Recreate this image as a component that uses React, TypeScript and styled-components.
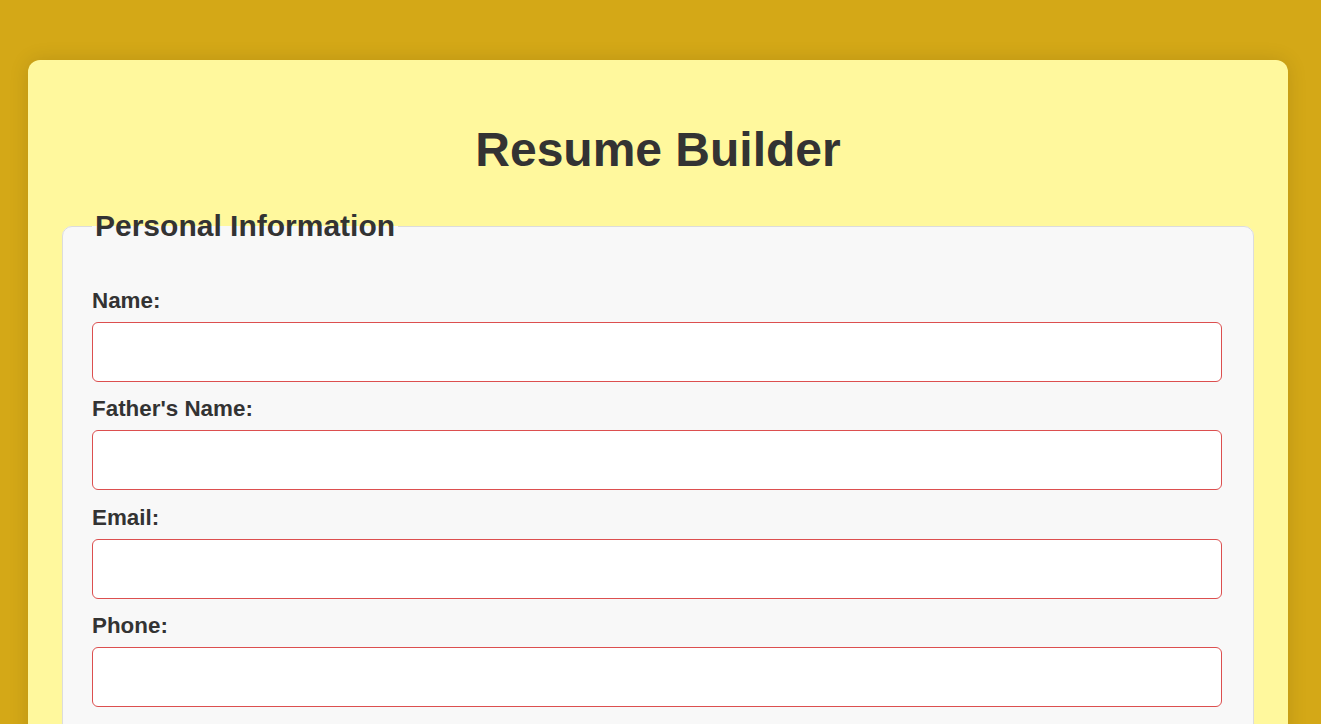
import React from "react";
import styled, { createGlobalStyle } from "styled-components";

const GlobalStyle = createGlobalStyle`
  html, body {
    margin: 0;
    padding: 0;
    background: #d4a817;
    font-family: "Liberation Sans", Arial, Helvetica, sans-serif;
    color: #333;
  }
  * { box-sizing: border-box; }
`;

const Page = styled.div`
  padding: 60px 33px 40px 28px;
  min-height: 100vh;
`;

const Card = styled.div`
  background: #fff89d;
  border-radius: 12px;
  box-shadow: 0 0 20px rgba(0, 0, 0, 0.12);
  padding: 62px 34px 40px;
`;

const Title = styled.h1`
  margin: 0 0 32px;
  text-align: center;
  font-size: 48px;
  font-weight: 700;
  color: #333;
`;

const Fieldset = styled.fieldset`
  margin: 0 0 30px;
  padding: 45px 31px 30px 29px;
  border: 1px solid #dcdcdc;
  border-radius: 10px;
  background: #f8f8f8;
`;

const Legend = styled.legend`
  font-size: 30px;
  font-weight: 700;
  color: #333;
  padding: 0 3px;
`;

const Field = styled.div`
  margin-bottom: 14.33px;
`;

const Label = styled.label`
  display: block;
  font-size: 22.4px;
  font-weight: 700;
  color: #333;
  line-height: 25px;
  margin-bottom: 9px;
`;

const Input = styled.input`
  display: block;
  width: 100%;
  height: 60px;
  border: 1px solid #dc4f4f;
  border-radius: 6px;
  background: #fff;
  padding: 0 12px;
  font-size: 18px;
  font-family: inherit;
  outline: none;
`;

const fields = [
  { id: "name", label: "Name:", type: "text" },
  { id: "father", label: "Father's Name:", type: "text" },
  { id: "email", label: "Email:", type: "email" },
  { id: "phone", label: "Phone:", type: "tel" },
];

export default function App() {
  return (
    <>
      <GlobalStyle />
      <Page>
        <Card>
          <Title>Resume Builder</Title>
          <Fieldset>
            <Legend>Personal Information</Legend>
            {fields.map((f) => (
              <Field key={f.id}>
                <Label htmlFor={f.id}>{f.label}</Label>
                <Input id={f.id} type={f.type} />
              </Field>
            ))}
          </Fieldset>
        </Card>
      </Page>
    </>
  );
}
